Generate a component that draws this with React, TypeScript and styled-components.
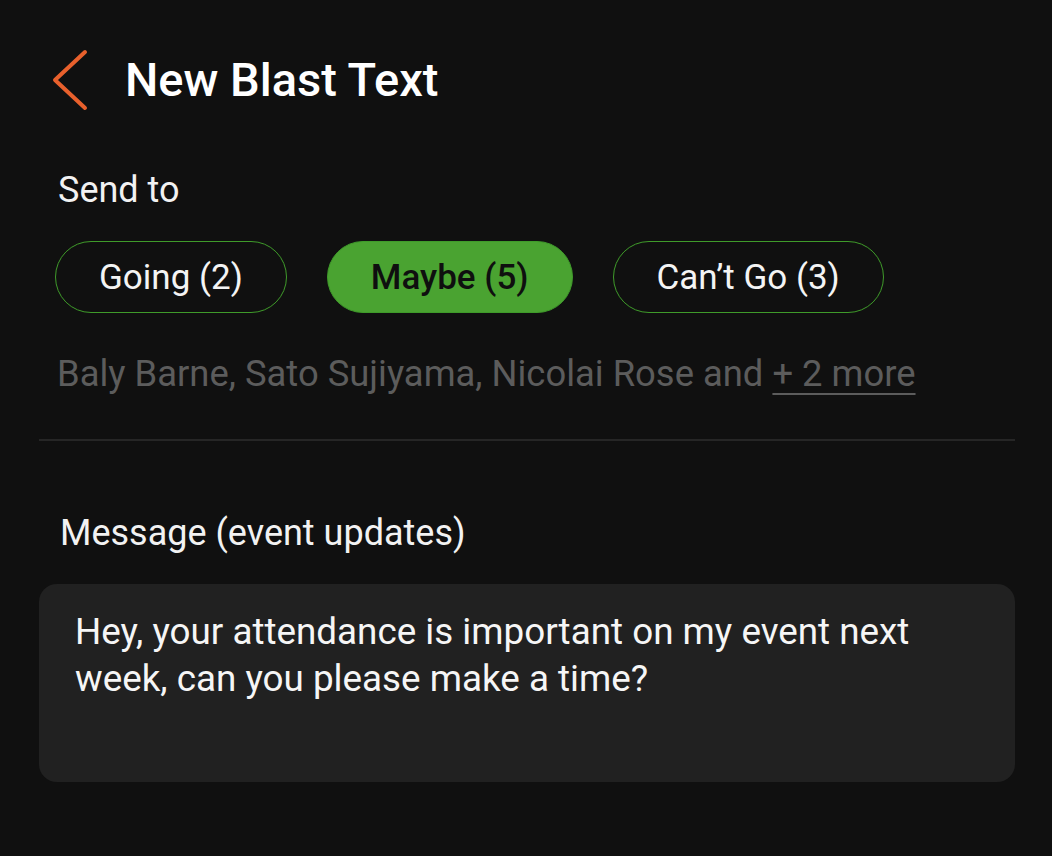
import styled, { createGlobalStyle } from 'styled-components';

const GlobalStyle = createGlobalStyle`
  html, body {
    margin: 0;
    padding: 0;
    background: #101010;
  }
  body {
    font-family: Roboto, "Liberation Sans", sans-serif;
    color: #ffffff;
  }
`;

const Screen = styled.div`
  width: 1052px;
  height: 856px;
  box-sizing: border-box;
  padding: 49px 37px 0 39px;
  display: flex;
  flex-direction: column;
  background: #101010;
`;

const Header = styled.div`
  display: flex;
  align-items: center;
  gap: 36px;
  padding-left: 12px;
  height: 62px;
`;

const BackButton = styled.button`
  display: flex;
  align-items: center;
  justify-content: center;
  width: 38px;
  height: 62px;
  padding: 0;
  border: none;
  background: none;
  cursor: pointer;
`;

const Title = styled.h1`
  margin: 0 0 2px;
  font-size: 47px;
  font-weight: 500;
  color: #ffffff;
`;

const Section = styled.div<{ $indent?: number }>`
  display: flex;
  flex-direction: column;
  padding-left: ${(p) => p.$indent ?? 0}px;
`;

const Label = styled.div`
  font-size: 36px;
  font-weight: 400;
  color: #f2f2f2;
  line-height: 40px;
`;

const SendLabel = styled(Label)`
  margin-top: 59px;
  padding-left: 3px;
`;

const PillRow = styled.div`
  display: flex;
  gap: 40px;
  margin-top: 31px;
`;

const Pill = styled.button<{ $active?: boolean }>`
  height: 72px;
  padding: 0 43px;
  border-radius: 36px;
  border: 1.5px solid #3f9b2a;
  background: ${(p) => (p.$active ? '#4aa331' : 'transparent')};
  color: ${(p) => (p.$active ? '#0f0f0f' : '#f4f4f4')};
  font-family: Roboto, "Liberation Sans", sans-serif;
  font-size: 35px;
  font-weight: ${(p) => (p.$active ? 500 : 400)};
  cursor: pointer;
`;

const Recipients = styled.div`
  margin-top: 41px;
  padding-left: 2px;
  font-size: 36.4px;
  line-height: 40px;
  color: #5c5c5c;
  white-space: nowrap;
`;

const More = styled.span`
  text-decoration: underline;
  text-underline-offset: 7px;
  text-decoration-thickness: 2px;
`;

const Divider = styled.hr`
  margin: 45px 0 0;
  border: none;
  height: 2px;
  background: #262626;
`;

const MessageLabel = styled(Label)`
  margin-top: 72px;
  padding-left: 21px;
`;

const MessageBox = styled.div`
  margin-top: 31px;
  height: 198px;
  box-sizing: border-box;
  padding: 24px 80px 24px 36px;
  border-radius: 18px;
  background: #212121;
  font-size: 36.8px;
  line-height: 47px;
  color: #f6f6f6;
`;

function ChevronLeft() {
  return (
    <svg width="38" height="62" viewBox="0 0 38 62" fill="none">
      <path d="M34 3 L4 31 L34 59" stroke="#e8602c" strokeWidth="4" strokeLinecap="round" strokeLinejoin="round" />
    </svg>
  );
}

const groups = [
  { label: 'Going (2)', active: false },
  { label: 'Maybe (5)', active: true },
  { label: 'Can’t Go (3)', active: false },
];

export default function App() {
  return (
    <>
      <GlobalStyle />
      <Screen>
        <Header>
          <BackButton aria-label="Back">
            <ChevronLeft />
          </BackButton>
          <Title>New Blast Text</Title>
        </Header>
        <Section $indent={16}>
          <SendLabel>Send to</SendLabel>
          <PillRow>
            {groups.map((g) => (
              <Pill key={g.label} $active={g.active}>
                {g.label}
              </Pill>
            ))}
          </PillRow>
          <Recipients>
            Baly Barne, Sato Sujiyama, Nicolai Rose and <More>+ 2 more</More>
          </Recipients>
        </Section>
        <Divider />
        <MessageLabel>Message (event updates)</MessageLabel>
        <MessageBox>
          Hey, your attendance is important on my event next week, can you please make a time?
        </MessageBox>
      </Screen>
    </>
  );
}
